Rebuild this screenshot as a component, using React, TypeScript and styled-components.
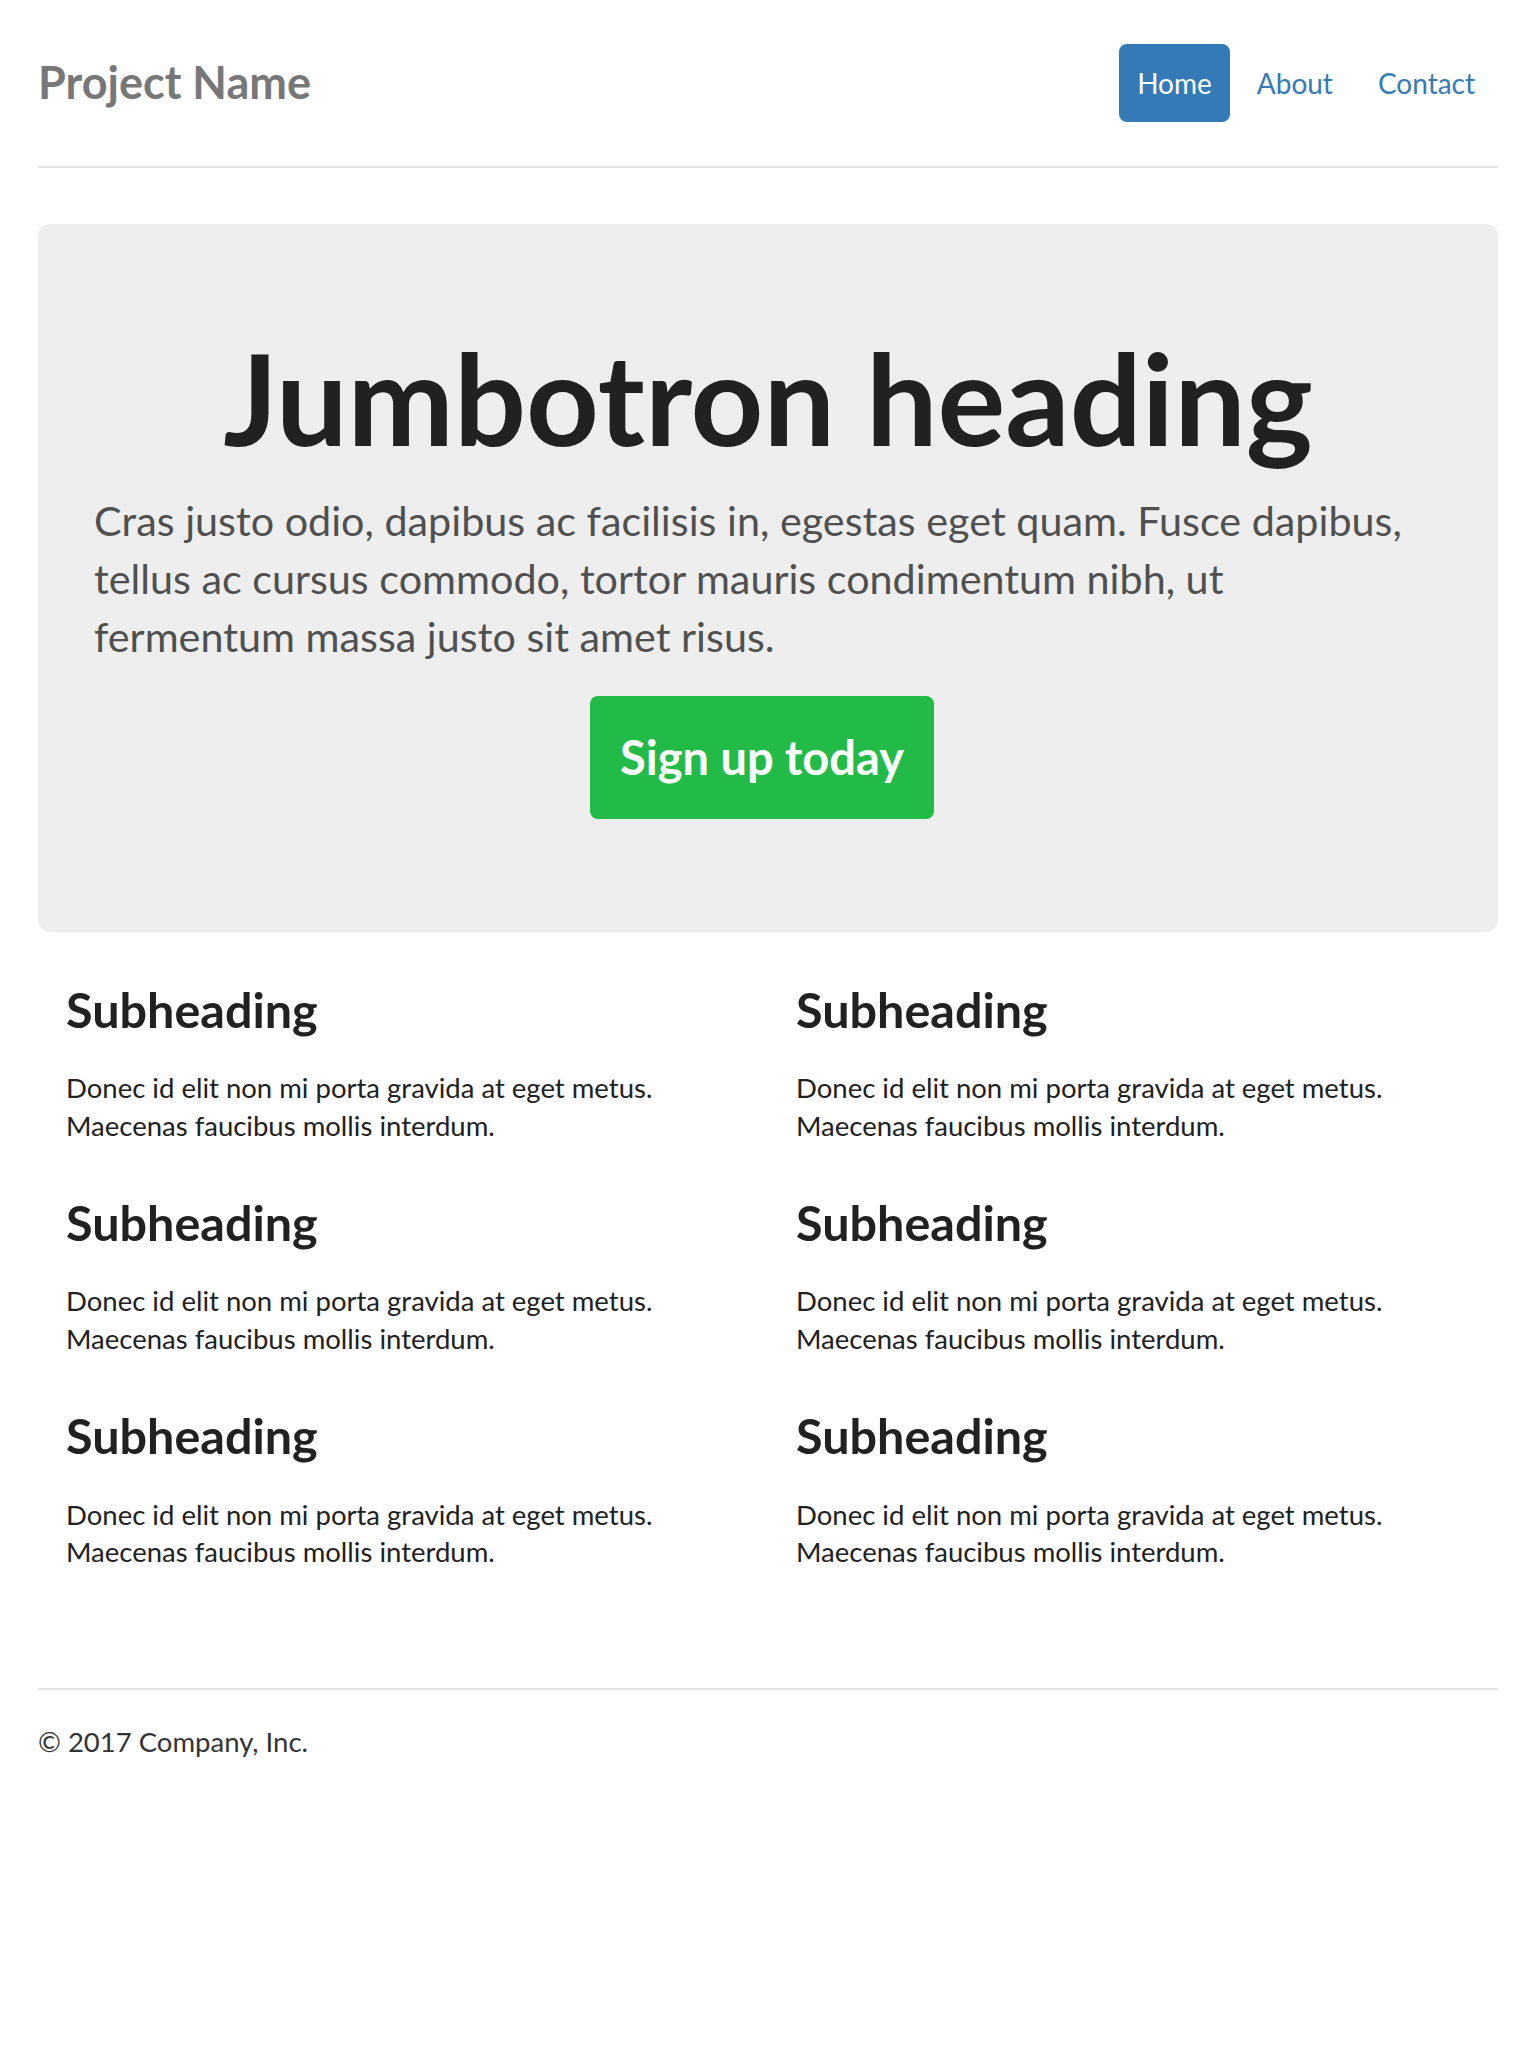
import React from "react";
import styled, { createGlobalStyle } from "styled-components";

const GlobalStyle = createGlobalStyle`
  html, body {
    margin: 0;
    padding: 0;
    background: #ffffff;
  }
  body {
    font-family: Lato, "Open Sans", "Liberation Sans", sans-serif;
    font-size: 27.5px;
    line-height: 1.42857;
    color: #222222;
  }
  * { box-sizing: border-box; }
`;

const Container = styled.div`
  width: 1460px;
  margin: 0 auto;
  padding-top: 44px;
`;

const Header = styled.header`
  display: flex;
  align-items: center;
  justify-content: space-between;
  padding-bottom: 44px;
  border-bottom: 2px solid #e5e5e5;
  margin-bottom: 56px;
`;

const Brand = styled.h3`
  margin: 0;
  font-size: 45px;
  font-weight: 700;
  line-height: 1.1;
  color: #777777;
`;

const Nav = styled.nav`
  display: flex;
  gap: 9px;
  margin-right: 5px;
`;

const NavLink = styled.a<{ $active?: boolean }>`
  display: block;
  padding: 19px 18px;
  font-size: 28px;
  line-height: 40px;
  border-radius: 8px;
  text-decoration: none;
  color: ${(p) => (p.$active ? "#ffffff" : "#337ab7")};
  background: ${(p) => (p.$active ? "#337ab7" : "transparent")};
`;

const Jumbotron = styled.section`
  display: flex;
  flex-direction: column;
  background: #eeeeee;
  border-radius: 12px;
  padding: 104px 56px 113px;
`;

const JumboHeading = styled.h1`
  margin: 0;
  text-align: center;
  font-size: 127px;
  font-weight: 700;
  line-height: 1.1;
  color: #212121;
`;

const Lead = styled.p`
  margin: 23px 0 31px;
  padding-right: 24px;
  font-size: 41.3px;
  line-height: 58px;
  color: #505050;
`;

const SignUpButton = styled.a`
  align-self: center;
  display: inline-block;
  margin-right: 12px;
  padding: 29px 30px 30px;
  font-size: 47px;
  font-weight: 700;
  line-height: 64px;
  color: #ffffff;
  background: #22bb48;
  border-radius: 8px;
  text-decoration: none;
`;

const Marketing = styled.section`
  display: grid;
  grid-template-columns: 1fr 1fr;
  padding-top: 51px;
  padding-bottom: 117px;
`;

const Column = styled.div`
  display: flex;
  flex-direction: column;
  padding: 0 28px;
`;

const Feature = styled.div`
  & + & {
    margin-top: 52px;
  }
`;

const SubHeading = styled.h4`
  margin: 0 0 33px;
  font-size: 48.5px;
  font-weight: 700;
  line-height: 1.1;
  color: #212121;
`;

const FeatureText = styled.p`
  margin: 0;
  font-size: 27.5px;
  line-height: 37.5px;
  color: #212121;
`;

const Footer = styled.footer`
  border-top: 2px solid #e5e5e5;
  padding-top: 33px;
  padding-bottom: 40px;
  font-size: 27.5px;
  line-height: 37.5px;
  color: #333333;
`;

const columns = [
  ["Subheading", "Subheading", "Subheading"],
  ["Subheading", "Subheading", "Subheading"],
];

export default function App() {
  return (
    <>
      <GlobalStyle />
      <Container>
        <Header>
          <Brand>Project Name</Brand>
          <Nav>
            <NavLink href="#" $active>
              Home
            </NavLink>
            <NavLink href="#">About</NavLink>
            <NavLink href="#">Contact</NavLink>
          </Nav>
        </Header>
        <Jumbotron>
          <JumboHeading>Jumbotron heading</JumboHeading>
          <Lead>
            Cras justo odio, dapibus ac facilisis in, egestas eget quam. Fusce
            dapibus, tellus ac cursus commodo, tortor mauris condimentum nibh,
            ut fermentum massa justo sit amet risus.
          </Lead>
          <SignUpButton href="#">Sign up today</SignUpButton>
        </Jumbotron>
        <Marketing>
          {columns.map((col, ci) => (
            <Column key={ci}>
              {col.map((h, i) => (
                <Feature key={i}>
                  <SubHeading>{h}</SubHeading>
                  <FeatureText>
                    Donec id elit non mi porta gravida at eget metus.
                    <br />
                    Maecenas faucibus mollis interdum.
                  </FeatureText>
                </Feature>
              ))}
            </Column>
          ))}
        </Marketing>
        <Footer>© 2017 Company, Inc.</Footer>
      </Container>
    </>
  );
}
